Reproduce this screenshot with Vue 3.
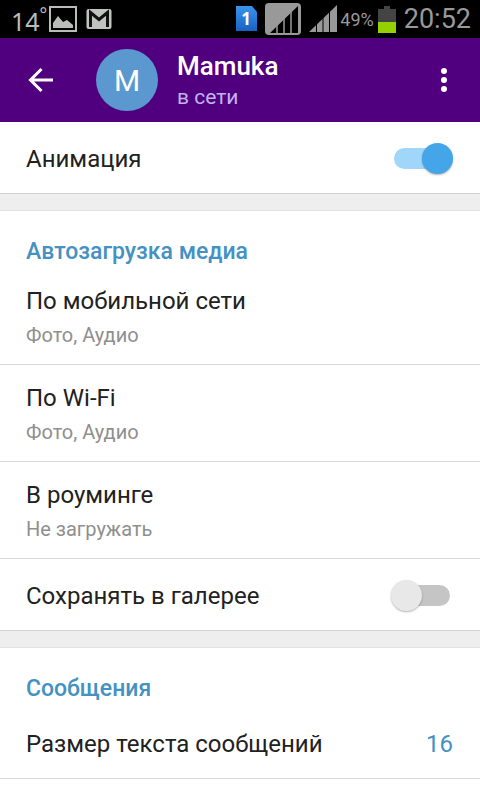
<script setup>
import { ref } from 'vue'

const animation = ref(true)
const saveToGallery = ref(false)
const textSize = ref(16)

const downloads = [
  { title: 'По мобильной сети', value: 'Фото, Аудио' },
  { title: 'По Wi-Fi', value: 'Фото, Аудио' },
  { title: 'В роуминге', value: 'Не загружать' },
]
</script>

<template>
  <div class="screen">
    <div class="status">
      <div class="group">
        <span class="temp">14<sup>°</sup></span>
        <svg class="picture" width="28" height="26" viewBox="0 0 28 26" aria-hidden="true">
          <rect x="1" y="1" width="26" height="24" fill="none" stroke="#b9bdb9" stroke-width="2" />
          <path d="M4 22V17L9 10L14 16L18 14L24 19V22Z" fill="#b9bdb9" />
        </svg>
        <svg class="mail" width="26" height="22" viewBox="0 0 26 22" aria-hidden="true">
          <rect x="0.5" y="1" width="25" height="20" rx="2" fill="#c0c3c0" />
          <path d="M4.500 19V4.500L13 11.500L21.500 4.500V19" fill="none" stroke="#111" stroke-width="3" />
        </svg>
      </div>
      <div class="group right">
        <svg width="22" height="26" viewBox="0 0 22 26" aria-hidden="true">
          <defs>
            <linearGradient id="sim" x1="0" y1="0" x2="0" y2="1">
              <stop offset="0" stop-color="#3a94ec" />
              <stop offset="1" stop-color="#1762c4" />
            </linearGradient>
          </defs>
          <path d="M0 0H16L21 6V25H0Z" fill="url(#sim)" />
          <text x="10" y="19" text-anchor="middle" class="sim-number">1</text>
        </svg>
        <svg class="signal-box" width="36" height="32" viewBox="0 0 36 32" aria-hidden="true">
          <rect width="36" height="32" rx="4" fill="#999" />
          <path d="M5 30L33 3V30Z" fill="#000" />
          <path d="M12 22V30M19 15V30M26 9V30" stroke="#999" stroke-width="1.500" />
        </svg>
        <svg class="signal" width="28" height="28" viewBox="0 0 28 28" aria-hidden="true">
          <path d="M0 27L28 0V27Z" fill="#999" />
          <path d="M7.500 18V28M14 12V28M20.500 5V28" stroke="#000" stroke-width="1" />
        </svg>
        <span class="percent">49%</span>
        <svg class="battery" width="18" height="27" viewBox="0 0 18 27" aria-hidden="true">
          <path d="M6 0H12V3H18V27H0V3H6Z" fill="#444" />
          <rect y="16" width="18" height="11" fill="#95d000" />
        </svg>
        <span class="clock">20:52</span>
      </div>
    </div>

    <header class="bar">
      <button class="icon-button" aria-label="Назад">
        <svg width="26" height="26" viewBox="0 0 26 26" aria-hidden="true">
          <path d="M25 13H3M13.500 2L2.500 13L13.500 24" fill="none" stroke="#fff" stroke-width="3" />
        </svg>
      </button>
      <span class="avatar">M</span>
      <div class="person">
        <h1>Mamuka</h1>
        <p>в сети</p>
      </div>
      <button class="icon-button menu" aria-label="Меню">
        <svg width="6" height="26" viewBox="0 0 6 26" fill="#fff" aria-hidden="true">
          <circle cx="3" cy="4" r="3" />
          <circle cx="3" cy="13" r="3" />
          <circle cx="3" cy="22" r="3" />
        </svg>
      </button>
    </header>

    <main>
      <section>
        <label class="row">
          <span>Анимация</span>
          <input v-model="animation" class="switch" type="checkbox" />
        </label>
      </section>

      <section>
        <h2>Автозагрузка медиа</h2>
        <button v-for="item in downloads" :key="item.title" class="row double">
          <span>{{ item.title }}</span>
          <small>{{ item.value }}</small>
        </button>
        <label class="row">
          <span>Сохранять в галерее</span>
          <input v-model="saveToGallery" class="switch" type="checkbox" />
        </label>
      </section>

      <section>
        <h2>Сообщения</h2>
        <button class="row line">
          <span>Размер текста сообщений</span>
          <span class="value">{{ textSize }}</span>
        </button>
      </section>
    </main>
  </div>
</template>

<style>
body {
  margin: 0;
  background: #fff;
}
</style>

<style scoped>
.screen {
  min-height: 100vh;
  font-family: Roboto, "Noto Sans", sans-serif;
  color: #212121;
}

button {
  border: 0;
  padding: 0;
  background: none;
  font: inherit;
  color: inherit;
  cursor: pointer;
}

.status {
  display: flex;
  justify-content: space-between;
  align-items: center;
  height: 38px;
  padding: 0 9px 0 11px;
  background: #000;
  color: #999;
}

.group {
  display: flex;
  align-items: center;
}

.temp {
  display: flex;
  align-items: flex-start;
  padding-top: 4px;
  font: 25px/34px "Noto Sans", sans-serif;
  color: #b9bdb9;
}

.temp sup {
  font-size: 18px;
  line-height: 20px;
}

.picture {
  margin-left: 2px;
}

.mail {
  margin-left: 9px;
}

.sim-number {
  font: bold 17px "Noto Sans", sans-serif;
  fill: #fff;
}

.signal-box {
  margin-left: 7px;
}

.signal {
  margin-left: 8px;
}

.percent {
  margin-left: 3px;
  font-size: 18px;
}

.battery {
  margin-left: 4px;
}

.clock {
  margin-left: 8px;
  font-size: 27px;
}

.bar {
  display: flex;
  align-items: center;
  height: 84px;
  padding: 0 23px 0 28px;
  background: #50007f;
  color: #fff;
}

.icon-button {
  display: flex;
  justify-content: center;
  align-items: center;
  width: 26px;
  height: 48px;
}

.menu {
  margin-left: auto;
}

.avatar {
  display: grid;
  place-items: center;
  width: 62px;
  height: 62px;
  margin: 0 19px 0 42px;
  border-radius: 50%;
  background: #5b98d0;
  font-size: 30px;
}

.person {
  padding-top: 2px;
}

h1,
p {
  margin: 0;
}

h1 {
  font-size: 26px;
  line-height: 32px;
  font-weight: 500;
}

p {
  font-size: 21px;
  line-height: 30px;
  color: #c1b3f2;
}

main {
  background: #eee;
}

section {
  background: #fff;
  border-bottom: 1px solid #d2d2d2;
}

section + section {
  margin-top: 16px;
  border-top: 1px solid #e2e2e2;
}

section:last-child {
  border-bottom: 0;
}

h2 {
  margin: 0;
  padding: 27px 26px 2px;
  font-size: 23px;
  line-height: 28px;
  font-weight: 500;
  color: #4491c3;
}

.row {
  display: flex;
  justify-content: space-between;
  align-items: center;
  box-sizing: border-box;
  width: 100%;
  min-height: 71px;
  padding: 2px 27px 0 26px;
  font-size: 24px;
  line-height: 32px;
  text-align: left;
}

.double {
  flex-direction: column;
  align-items: flex-start;
  justify-content: flex-start;
  padding: 17px 26px 13px;
  border-bottom: 1px solid #d9d9d9;
}

.double small {
  padding-top: 2px;
  font-size: 20px;
  color: #8f8f8f;
}

.line {
  min-height: 74px;
  padding-top: 4px;
  border-bottom: 1px solid #d9d9d9;
}

.value {
  color: #4491c3;
}

.switch {
  display: grid;
  align-items: center;
  appearance: none;
  width: 62px;
  height: 31px;
  margin: 0;
  cursor: pointer;
}

.switch::before,
.switch::after {
  content: "";
  grid-area: 1 / 1;
}

.switch::before {
  height: 21px;
  margin: 0 3px;
  border-radius: 11px;
  background: #c5c5c5;
}

.switch::after {
  width: 31px;
  height: 31px;
  border-radius: 50%;
  background: #e8e8e8;
  box-shadow: 0 1px 2px rgba(0, 0, 0, 0.3);
}

.switch:checked::before {
  background: #a0d6fa;
}

.switch:checked::after {
  justify-self: end;
  background: #45a5e9;
}
</style>
